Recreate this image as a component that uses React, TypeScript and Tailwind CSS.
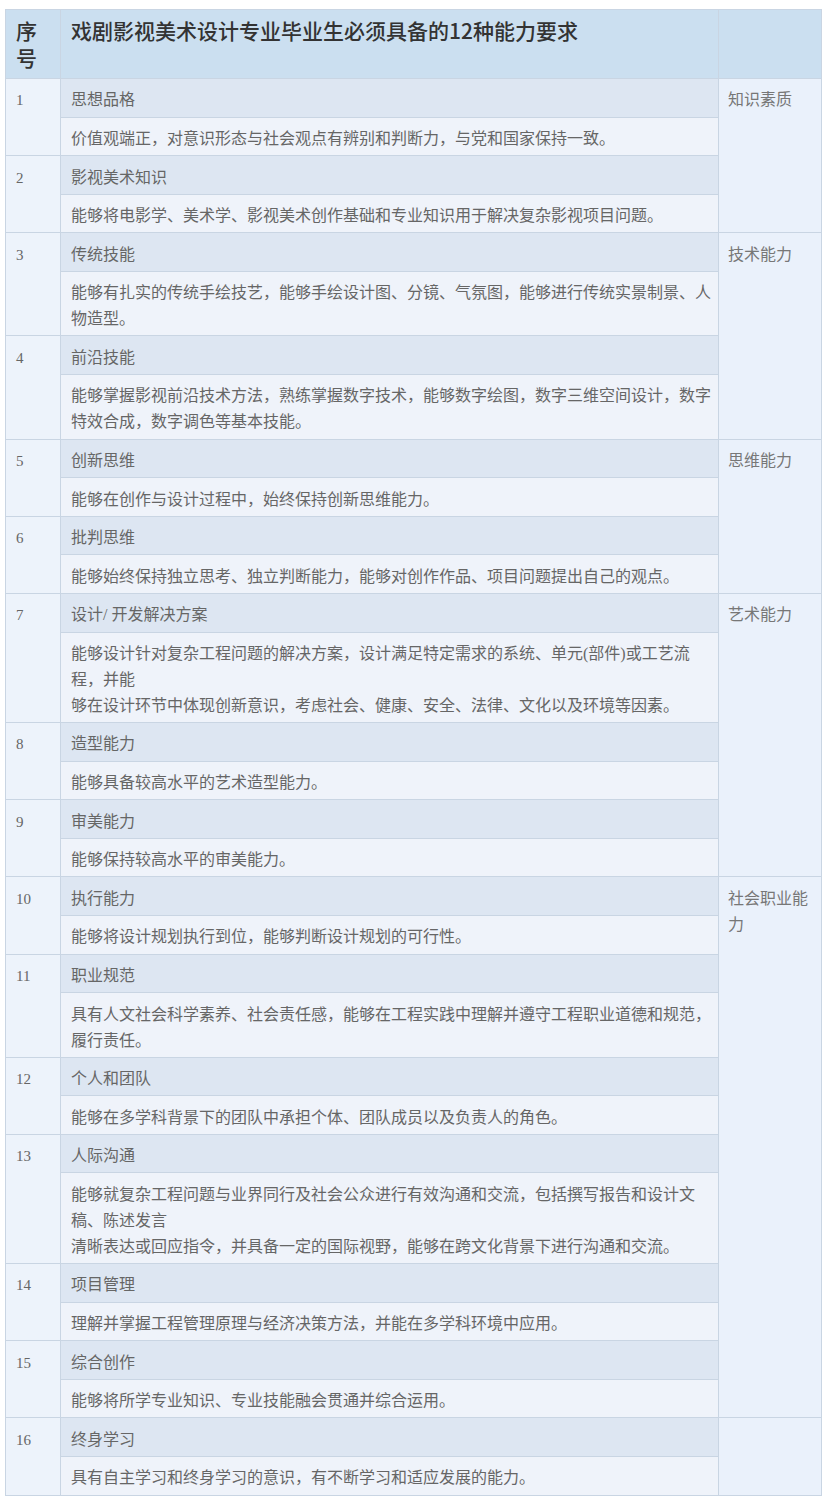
const items = [
  { no: 1, title: '思想品格', desc: ['价值观端正，对意识形态与社会观点有辨别和判断力，与党和国家保持一致。'] },
  { no: 2, title: '影视美术知识', desc: ['能够将电影学、美术学、影视美术创作基础和专业知识用于解决复杂影视项目问题。'] },
  {
    no: 3,
    title: '传统技能',
    desc: ['能够有扎实的传统手绘技艺，能够手绘设计图、分镜、气氛图，能够进行传统实景制景、人', '物造型。'],
  },
  {
    no: 4,
    title: '前沿技能',
    desc: ['能够掌握影视前沿技术方法，熟练掌握数字技术，能够数字绘图，数字三维空间设计，数字', '特效合成，数字调色等基本技能。'],
  },
  { no: 5, title: '创新思维', desc: ['能够在创作与设计过程中，始终保持创新思维能力。'] },
  { no: 6, title: '批判思维', desc: ['能够始终保持独立思考、独立判断能力，能够对创作作品、项目问题提出自己的观点。'] },
  {
    no: 7,
    title: '设计/ 开发解决方案',
    desc: [
      '能够设计针对复杂工程问题的解决方案，设计满足特定需求的系统、单元(部件)或工艺流',
      '程，并能',
      '够在设计环节中体现创新意识，考虑社会、健康、安全、法律、文化以及环境等因素。',
    ],
  },
  { no: 8, title: '造型能力', desc: ['能够具备较高水平的艺术造型能力。'] },
  { no: 9, title: '审美能力', desc: ['能够保持较高水平的审美能力。'] },
  { no: 10, title: '执行能力', desc: ['能够将设计规划执行到位，能够判断设计规划的可行性。'] },
  {
    no: 11,
    title: '职业规范',
    desc: ['具有人文社会科学素养、社会责任感，能够在工程实践中理解并遵守工程职业道德和规范，', '履行责任。'],
  },
  { no: 12, title: '个人和团队', desc: ['能够在多学科背景下的团队中承担个体、团队成员以及负责人的角色。'] },
  {
    no: 13,
    title: '人际沟通',
    desc: [
      '能够就复杂工程问题与业界同行及社会公众进行有效沟通和交流，包括撰写报告和设计文',
      '稿、陈述发言',
      '清晰表达或回应指令，并具备一定的国际视野，能够在跨文化背景下进行沟通和交流。',
    ],
  },
  { no: 14, title: '项目管理', desc: ['理解并掌握工程管理原理与经济决策方法，并能在多学科环境中应用。'] },
  { no: 15, title: '综合创作', desc: ['能够将所学专业知识、专业技能融会贯通并综合运用。'] },
  { no: 16, title: '终身学习', desc: ['具有自主学习和终身学习的意识，有不断学习和适应发展的能力。'] },
]

// category cell starts at item no, spans `span` items (2 rows each)
const groups: Record<number, { label: string; span: number }> = {
  1: { label: '知识素质', span: 2 },
  3: { label: '技术能力', span: 2 },
  5: { label: '思维能力', span: 2 },
  7: { label: '艺术能力', span: 3 },
  10: { label: '社会职业能力', span: 6 },
  16: { label: '', span: 1 },
}

const cell = 'border border-[#c9d5e3] align-top pt-[8.4px] pb-[3.2px] leading-[26px]'

export default function App() {
  return (
    <div
      className="min-h-screen bg-white pt-[9px] pl-[5px]"
      style={{ fontFamily: '"Liberation Serif", "Noto Sans CJK SC", serif' }}
    >
      <table className="w-[816px] table-fixed border-collapse text-[16px] text-[#666]">
        <colgroup>
          <col className="w-[55px]" />
          <col className="w-[658px]" />
          <col className="w-[103px]" />
        </colgroup>
        <thead>
          <tr
            className="bg-[#cbdff0] text-[21px] text-[#333]"
            style={{ fontFamily: '"Noto Sans CJK SC", sans-serif' }}
          >
            <th className="border border-[#c9d5e3] px-[10px] py-[7px] text-left align-top leading-[27px] font-medium">
              序号
            </th>
            <th className="border border-[#c9d5e3] px-[10px] py-[7px] text-left align-top leading-[27px] font-medium">
              戏剧影视美术设计专业毕业生必须具备的12种能力要求
            </th>
            <th className="border border-[#c9d5e3] px-[9px] py-[7px]" />
          </tr>
        </thead>
        <tbody>
          {items.map((item) => {
            const group = groups[item.no]
            return [
              <tr key={`t${item.no}`}>
                <td rowSpan={2} className={`${cell} bg-[#edf3fb] pl-[10px] text-[15px]`}>
                  {item.no}
                </td>
                <td className={`${cell} bg-[#dde6f2] pl-[10px] pr-[6px] whitespace-nowrap`}>{item.title}</td>
                {group && (
                  <td rowSpan={group.span * 2} className={`${cell} bg-[#eaf1fb] px-[9px] text-[#777]`}>
                    {group.label}
                  </td>
                )}
              </tr>,
              <tr key={`d${item.no}`}>
                <td className={`${cell} bg-[#eff3fa] pl-[10px] pr-[6px]`}>
                  {item.desc.map((line) => (
                    <div key={line} className="whitespace-nowrap">
                      {line}
                    </div>
                  ))}
                </td>
              </tr>,
            ]
          })}
        </tbody>
      </table>
    </div>
  )
}
